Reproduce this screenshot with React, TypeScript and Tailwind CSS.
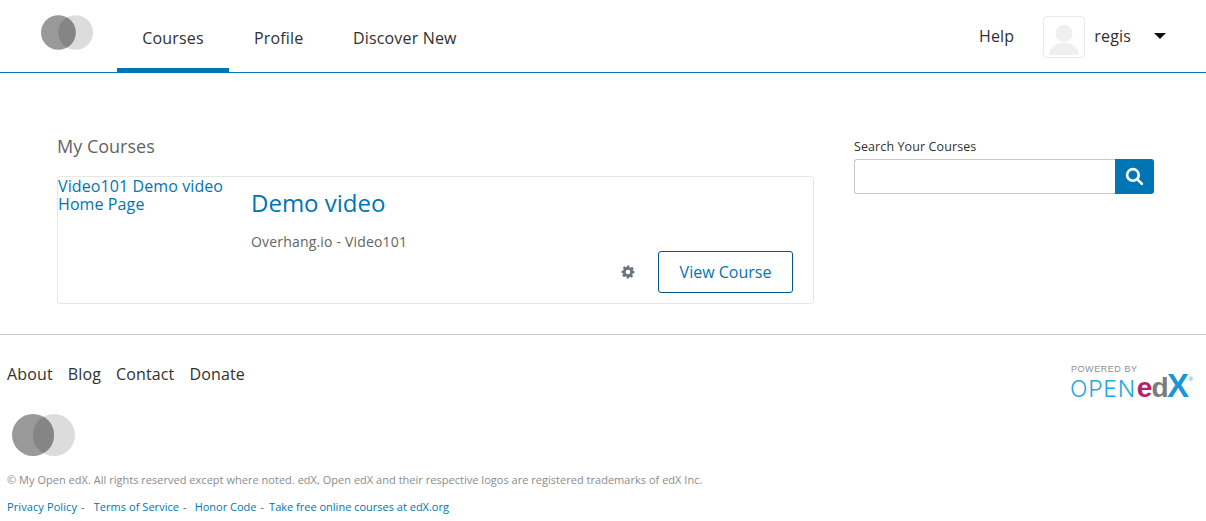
import React from "react";

function Logo({ className }: { className: string }) {
  return (
    <svg className={className} viewBox="0 0 63 42" aria-hidden="true">
      <circle cx="42" cy="21" r="21" fill="#dcdcdc" />
      <circle cx="21" cy="21" r="21" fill="#999999" />
      <path d="M31.5 2.8a21 21 0 0 1 0 36.4a21 21 0 0 1 0-36.4z" fill="#858585" />
    </svg>
  );
}

function Avatar() {
  return (
    <div className="w-[42px] h-[42px] rounded-[4px] border border-[#e9e9e9] bg-white overflow-hidden">
      <svg viewBox="0 0 42 42" className="w-full h-full" aria-hidden="true">
        <circle cx="21" cy="17" r="9" fill="#efefef" />
        <path d="M5.500 40c0-8 6.500-13 15.500-13s15.500 5 15.500 13z" fill="#efefef" />
      </svg>
    </div>
  );
}

const courseLinkCls = "text-[#0075b4]";

export default function App() {
  return (
    <div className="h-[521px] overflow-hidden bg-white font-['Open_Sans',sans-serif] text-[#313131]">
      {/* Header */}
      <header className="h-[73px] flex justify-between border-b border-[#0075b4] shadow-[0_1px_4px_rgba(0,0,0,0.04)] pr-[40px]">
        <div className="flex">
          <div className="w-[117px] pl-[41px] pt-[15px]">
            <Logo className="w-[52px] h-[35px]" />
          </div>
          <nav className="flex text-[16px] tracking-[0.17px] text-[#313131]">
            <a className="w-[112px] text-center h-[72px] leading-[76px] border-b-4 border-[#0075b4]">Courses</a>
            <a className="pl-[25px] pr-[24.500px] h-[72px] leading-[76px]">Profile</a>
            <a className="px-[25px] h-[72px] leading-[76px]">Discover New</a>
          </nav>
        </div>
        <div className="flex items-center text-[16px] tracking-[0.17px] pt-[2px]">
          <a className="mr-[29px] mb-[2px]">Help</a>
          <Avatar />
          <span className="ml-[9px] mr-[23px] mb-[2px]">regis</span>
          <span className="w-0 h-0 mt-[-3px] border-x-[6px] border-x-transparent border-t-[6px] border-t-[#111]" />
        </div>
      </header>

      {/* Main */}
      <main className="h-[262px] border-b border-[#c8c8c8] pl-[57px] pt-[60px] flex">
        <section className="w-[757px]">
          <h2 className="text-[18px] leading-[27px] text-[#646464]">My Courses</h2>
          <article className="mt-[16px] h-[128px] border border-[#e7e7e7] rounded-[3px] flex">
            <a className={`w-[193px] shrink-0 text-[16px] tracking-[0.1px] leading-[18px] ${courseLinkCls}`}>
              <div className="w-[170px]">Video101 Demo video Home Page</div>
            </a>
            <div className="flex-1 pr-[20px] pt-[9px] flex flex-col">
              <h3 className={`text-[24px] leading-[33px] ${courseLinkCls}`}>Demo video</h3>
              <p className="mt-[13px] text-[14px] tracking-[0.18px] leading-[19px] text-[#646464]">Overhang.io - Video101</p>
              <div className="flex justify-end items-center">
                <svg className="w-[14px] h-[14px] mr-[23px]" viewBox="0 0 24 24" fill="#6b7280" aria-hidden="true">
                  <path
                    fillRule="evenodd"
                    d="M10 1h4l.6 3.100 1.900.8 2.600-1.800 2.800 2.800-1.800 2.600.8 1.900L23 10v4l-3.100.6-.8 1.900 1.800 2.600-2.800 2.800-2.600-1.800-1.900.8L14 23h-4l-.6-3.100-1.900-.8-2.600 1.800-2.800-2.800 1.800-2.600-.8-1.900L1 14v-4l3.100-.6.8-1.900-1.800-2.600 2.800-2.800 2.600 1.800 1.900-.8zM12 8a4 4 0 1 0 0 8a4 4 0 0 0 0-8z"
                  />
                </svg>
                <button className="w-[135px] h-[42px] border border-[#065683] rounded-[3px] text-[16px] text-[#0075b4] bg-white">
                  View Course
                </button>
              </div>
            </div>
          </article>
        </section>
        <aside className="ml-[40px] w-[300px] pt-[5px]">
          <label className="block text-[12.500px] tracking-[0.1px] leading-[17px] text-[#313131]">Search Your Courses</label>
          <div className="flex mt-[4px] h-[35px]">
            <input className="flex-1 min-w-0 border border-[#c8c8c8] border-r-0 rounded-l-[3px] bg-white" />
            <button className="w-[39px] bg-[#0075b4] rounded-r-[3px] flex items-center justify-center">
              <svg className="w-[19px] h-[19px]" viewBox="0 0 18 18" fill="none" stroke="#fff" strokeWidth="2.500" aria-hidden="true">
                <circle cx="7.500" cy="7.500" r="5.500" />
                <path d="M11.500 11.500 16 16" strokeLinecap="round" />
              </svg>
            </button>
          </div>
        </aside>
      </main>

      {/* Footer */}
      <footer className="flex justify-between pl-[7px] pr-[8px]">
        <div>
          <nav className="flex gap-[15px] text-[16px] tracking-[0.14px] leading-[22px] pt-[28px] text-[#313131]">
            <a>About</a>
            <a>Blog</a>
            <a>Contact</a>
            <a>Donate</a>
          </nav>
          <Logo className="w-[63px] h-[42px] ml-[5px] mt-[29px]" />
          <p className="mt-[16px] text-[11px] tracking-[0.023px] leading-[15px] text-[#8b8b8b]">
            © My Open edX. All rights reserved except where noted. edX, Open edX and their respective logos are registered trademarks of edX Inc.
          </p>
          <div className="mt-[12px] text-[11px] leading-[15px] text-[#0075b4] flex">
            <a className="tracking-[0.1px]">Privacy Policy</a>
            <span className="text-[#646464] ml-[4px] mr-[9px]">-</span>
            <a className="tracking-[0.05px]">Terms of Service</a>
            <span className="text-[#646464] ml-[4px] mr-[8px]">-</span>
            <a>Honor Code</a>
            <span className="text-[#646464] ml-[4px] mr-[5px]">-</span>
            <a>Take free online courses at edX.org</a>
          </div>
        </div>
        <div className="pt-[29px] w-[128px] font-['Liberation_Sans',sans-serif]">
          <div className="h-[10px] text-[9px] leading-[10px] tracking-[0.55px] text-[#8f8f8f] pl-[1px]">POWERED BY</div>
          <div className="flex items-baseline h-[24px] leading-[24px] whitespace-nowrap">
            <span className="text-[23px] font-['Inter',sans-serif] font-light text-[#23a8e0] tracking-[0.7px]">OPEN</span>
            <span className="text-[28px] font-bold text-[#b5206f] tracking-[-1px] ml-[1px]">e</span>
            <span className="text-[28px] font-bold text-[#7b7b7b] tracking-[-1.5px]">d</span>
            <span className="text-[33px] font-black text-[#1b95d6] tracking-[-0.5px]">X</span>
            <span className="text-[6px] text-[#1b95d6] self-start leading-[10px]">®</span>
          </div>
        </div>
      </footer>
    </div>
  );
}
